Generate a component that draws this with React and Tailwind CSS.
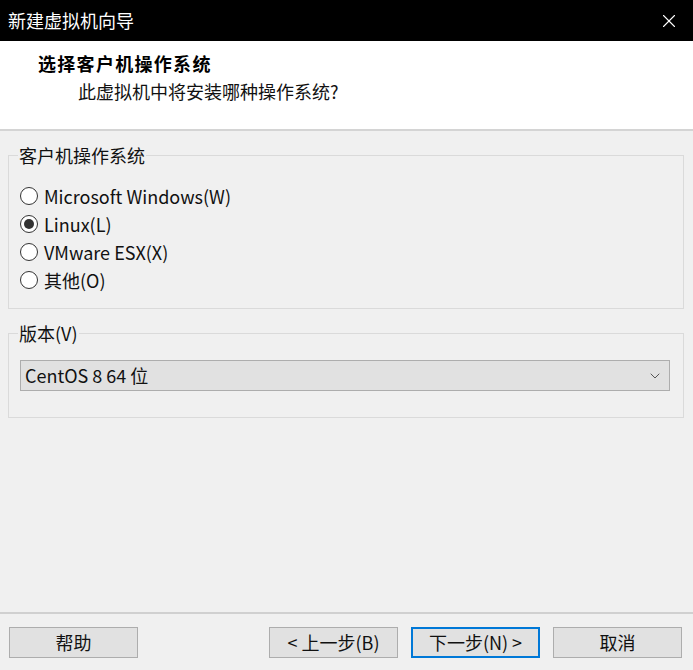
import { X, ChevronDown } from "lucide-react";

const font = { fontFamily: '"Noto Sans CJK SC", "Noto Sans", sans-serif' };

const Radio = ({ label, checked }) => (
  <div className="flex items-center h-[28px]">
    <span className="w-[18px] h-[18px] rounded-full border border-[#333] bg-white flex items-center justify-center">
      {checked && <span className="w-[10px] h-[10px] rounded-full bg-[#333]" />}
    </span>
    <span className="ml-[6px] text-[18px] text-[#111]">{label}</span>
  </div>
);

const Button = ({ children, focused }) => (
  <button
    className={
      "w-[129px] h-[31px] bg-[#e1e1e1] text-[18px] text-[#111] flex items-center justify-center " +
      (focused ? "border-2 border-[#0078d7]" : "border border-[#adadad]")
    }
  >
    {children}
  </button>
);

export default function App() {
  return (
    <div className="w-[693px] h-[670px] flex flex-col bg-[#f0f0f0] overflow-hidden" style={font}>
      <div className="h-[41px] bg-black flex items-center justify-between pl-[8px] pr-[13px]">
        <span className="text-white text-[18px]">新建虚拟机向导</span>
        <X size={22} strokeWidth={1.2} className="text-white" />
      </div>

      <div className="h-[90px] bg-white border-b-2 border-[#d4d4d4] pt-[9px]">
        <div className="pl-[38px] text-[18px] font-bold text-black leading-[27px] tracking-[1.3px]">选择客户机操作系统</div>
        <div className="pl-[78px] text-[18px] text-[#111] leading-[27px] mt-[1px]">此虚拟机中将安装哪种操作系统?</div>
      </div>

      <div className="flex-1 px-[8px] pt-[13px]">
        <fieldset className="w-[676px] border border-[#dadada] pl-[11px] pb-[14px]">
          <legend className="ml-[-2px] px-[1px] text-[18px] leading-[22px] text-[#111]">客户机操作系统</legend>
          <div className="pt-[16px] flex flex-col">
            <Radio label="Microsoft Windows(W)" />
            <Radio label="Linux(L)" checked />
            <Radio label="VMware ESX(X)" />
            <Radio label="其他(O)" />
          </div>
        </fieldset>

        <fieldset className="mt-[13px] w-[676px] border border-[#dadada] pl-[11px] pr-[13px] pb-[26px]">
          <legend className="ml-[-2px] px-[1px] text-[18px] leading-[22px] text-[#111]">版本(V)</legend>
          <div className="mt-[16px] h-[31px] bg-[#e1e1e1] border border-[#adadad] flex items-center justify-between pl-[4px] pr-[6px]">
            <span className="text-[18px] text-[#111]">CentOS 8 64 位</span>
            <ChevronDown size={16} strokeWidth={1.5} className="text-[#555]" />
          </div>
        </fieldset>
      </div>

      <div className="h-[58px] border-t-2 border-[#d0d0d0] flex items-start pt-[13px] pl-[9px] pr-[11px]">
        <Button>帮助</Button>
        <div className="flex-1" />
        <div className="flex gap-[13px]">
          <Button>&lt; 上一步(B)</Button>
          <Button focused>下一步(N) &gt;</Button>
          <Button>取消</Button>
        </div>
      </div>
    </div>
  );
}
